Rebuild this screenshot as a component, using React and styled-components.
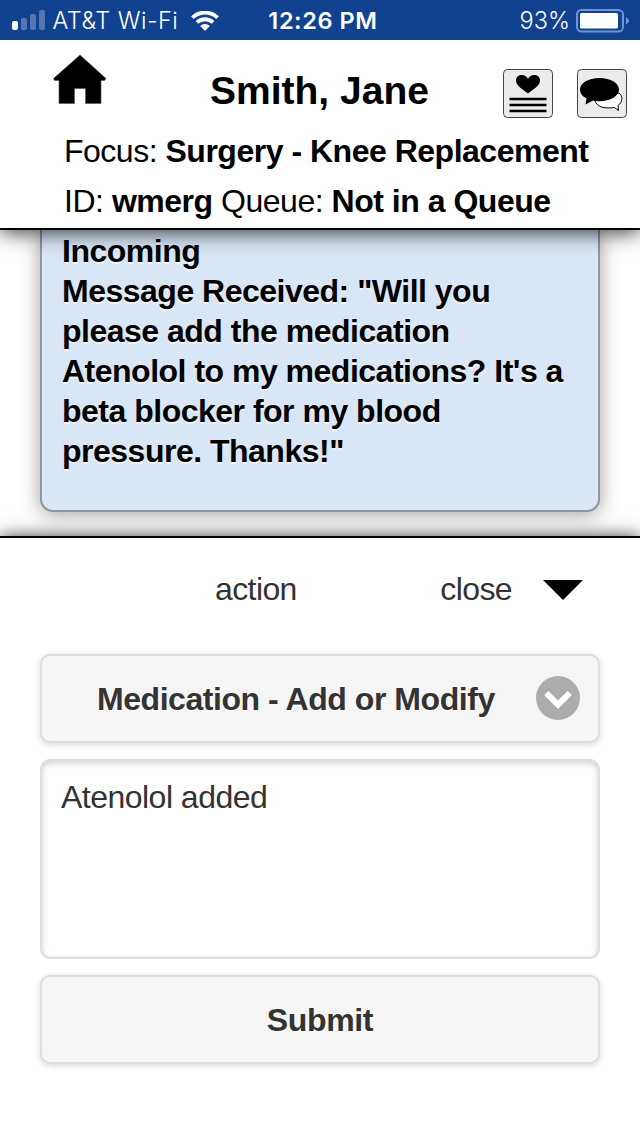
import React from "react";
import styled, { createGlobalStyle } from "styled-components";

const GlobalStyle = createGlobalStyle`
  * { box-sizing: border-box; }
  body { margin: 0; background: #fff; }
`;

const Screen = styled.div`
  width: 640px;
  height: 1136px;
  display: flex;
  flex-direction: column;
  overflow: hidden;
  background: #fff;
  color: #000;
  font: 32px/40px "Liberation Sans", Arial, sans-serif;
`;

const StatusBar = styled.div`
  height: 40px;
  flex: none;
  display: grid;
  grid-template-columns: 1fr auto 1fr;
  align-items: center;
  padding: 2px 11px 0 12px;
  background: #11428f;
  color: #fff;
  font: 400 23.5px/38px Inter, Roboto, sans-serif;
  position: relative;
  z-index: 3;
`;

const StatusGroup = styled.div`
  display: flex;
  align-items: center;
  height: 38px;
  justify-content: ${(p) => (p.$end ? "flex-end" : "flex-start")};
  svg { flex: none; }
`;

const StatusText = styled.span`
  font-weight: ${(p) => p.$weight || 350};
  font-size: ${(p) => p.$size || 23.5}px;
  letter-spacing: ${(p) => p.$spacing || 0}px;
  margin: 0 ${(p) => p.$right || 0}px 0 ${(p) => p.$left || 0}px;
  white-space: nowrap;
`;

const Header = styled.header`
  height: 190px;
  flex: none;
  background: #fff;
  border-bottom: 2px solid #000;
  box-shadow: 0 2px 20px rgba(0, 0, 0, 0.8);
  position: relative;
  z-index: 2;
`;

const TitleRow = styled.div`
  display: flex;
  align-items: flex-start;
  height: 86px;
  padding: 14px 13px 0 52px;
`;

const Title = styled.h1`
  margin: 13px 0 0;
  flex: 1;
  padding-left: 102px;
  font-size: 39px;
  line-height: 48px;
  white-space: nowrap;
`;

const IconTiles = styled.div`
  display: flex;
  gap: 24px;
  padding-top: 14px;
`;

const DetailLine = styled.p`
  margin: 0;
  padding-left: 64px;
  height: 50px;
  line-height: 50px;
  letter-spacing: ${(p) => p.$spacing || 0}px;
  white-space: nowrap;
`;

const Messages = styled.main`
  height: 306px;
  flex: none;
  padding: 0 40px;
`;

const MessageCard = styled.article`
  height: 282px;
  padding: 1px 20px 0;
  background: #d9e6f5;
  border: 2px solid #90969d;
  border-top: 0;
  border-radius: 0 0 13px 13px;
  box-shadow: 0 2px 20px rgba(50, 45, 35, 0.45);
  font-weight: 700;
  text-shadow: 0 2px 0 #f3f3f3;
`;

const MessageLine = styled.div`
  letter-spacing: -0.5px;
  white-space: nowrap;
`;

const ActionPanel = styled.section`
  flex: 1;
  padding: 0 40px;
  background: #fff;
  border-top: 2px solid #000;
  box-shadow: 0 2px 18px rgba(0, 0, 0, 0.9);
  position: relative;
  z-index: 1;
  color: #333;
`;

const PanelBar = styled.div`
  display: flex;
  align-items: center;
  height: 102px;
  padding-left: 175px;
  letter-spacing: -0.6px;
`;

const CloseControl = styled.div`
  display: flex;
  align-items: center;
  gap: 30.5px;
  margin-left: 143.5px;
  svg { margin-top: 2px; }
`;

const Form = styled.div`
  display: flex;
  flex-direction: column;
  gap: 16px;
  padding-top: 14px;
`;

const FormButton = styled.button`
  display: flex;
  align-items: center;
  justify-content: center;
  width: 560px;
  height: 89px;
  padding: ${(p) => (p.$select ? "0 18px 0 55px" : "0")};
  font: 700 32px/40px "Liberation Sans", Arial, sans-serif;
  letter-spacing: ${(p) => p.$spacing || -0.45}px;
  color: #333;
  background: #f5f5f5;
  border: 2px solid #ddd;
  border-radius: 10px;
  box-shadow: 0 2px 6px rgba(0, 0, 0, 0.15);
  text-shadow: 0 2px 0 #f8f8f8;
  svg { margin-bottom: 2px; }
`;

const ButtonLabel = styled.span`
  flex: ${(p) => (p.$fill ? 1 : "none")};
  text-align: ${(p) => (p.$fill ? "left" : "center")};
  white-space: nowrap;
`;

const Notes = styled.textarea`
  display: block;
  width: 560px;
  height: 200px;
  margin: 0;
  padding: 16px 19px;
  resize: none;
  outline: none;
  font: 400 32px/40px "Liberation Sans", Arial, sans-serif;
  letter-spacing: -0.52px;
  color: #333;
  background: #fff;
  border: 2px solid #ddd;
  border-radius: 10px;
  box-shadow: inset 0 2px 6px rgba(0, 0, 0, 0.2);
`;

const Signal = () => (
  <svg width="34" height="22" viewBox="0 0 34 22">
    <rect x="0" y="11" width="6" height="9" rx="2" fill="#fff" />
    <g fill="#5576b2">
      <rect x="9" y="8" width="6" height="12" rx="2" />
      <rect x="18" y="4" width="6" height="16" rx="2" />
      <rect x="27" y="0" width="6" height="20" rx="2" />
    </g>
  </svg>
);

const Wifi = () => (
  <svg width="28" height="20" viewBox="0 0 28 20" fill="none" stroke="#fff" strokeWidth="3.8">
    <path d="M1.4 6.7a18 18 0 0 1 25.2 0" />
    <path d="M6 11.5a11.5 11.5 0 0 1 16 0" />
    <path d="M9.2 15a7 7 0 0 1 9.600 0L14 20z" fill="#fff" stroke="none" />
  </svg>
);

const Battery = () => (
  <svg width="53" height="24" viewBox="0 0 53 24">
    <rect x="1" y="1" width="46" height="21.5" rx="4.5" fill="none" stroke="#6f94d6" strokeWidth="2" />
    <rect x="4" y="4" width="38" height="15.5" rx="1.5" fill="#fff" />
    <path d="M50 8q6 3.8 0 7.6z" fill="#6f94d6" />
  </svg>
);

const Home = () => (
  <svg width="56" height="52" viewBox="0 0 56 52">
    <path d="M28 1 54 24.500 52.500 26.500H49V49.500H33.500V34.500H22.500V49.500H7V26.500H2.500L1.500 24.500z" fill="#000" stroke="#555" strokeWidth=".6" strokeLinejoin="round" />
  </svg>
);

const HealthTile = () => (
  <svg width="50" height="50" viewBox="0 0 50 50">
    <rect x=".5" y="1.5" width="49" height="48" rx="4" fill="#ebebeb" stroke="#444" />
    <path d="M25 25.500C20 21.500 13 18 13 12.500C13 8.500 16 7 18.500 7C21.500 7 24 8.500 25 11C26 8.500 28.500 7 31.500 7C34 7 37 8.500 37 12.500C37 18 30 21.500 25 25.500Z" />
    <path d="M6.500 31H43.500M6.500 37H43.500M6.500 43H43.500" stroke="#000" strokeWidth="2.6" />
  </svg>
);

const ChatTile = () => (
  <svg width="50" height="50" viewBox="0 0 50 50">
    <rect x=".5" y="1.5" width="49" height="48" rx="4" fill="#ebebeb" stroke="#444" />
    <path d="M17.500 32C20 39 27 41 37.500 39.500L41.500 42.500L41 37.500C46 34 46 28 42 25Z" fill="#fff" stroke="#000" />
    <path d="M22.500 10C33.500 10 42 15 42 21.600C42 28 33.500 33.300 22.500 33.300C20 33.300 18 33 16 32.600L8.500 36.500L9.500 30.500C5.500 28.500 3 25.500 3 21.600C3 15 11.500 10 22.500 10Z" />
  </svg>
);

const DownArrow = () => (
  <svg width="40" height="20" viewBox="0 0 40 20">
    <path d="M0 0H40L20 20z" />
  </svg>
);

const SelectArrow = () => (
  <svg width="44" height="44" viewBox="0 0 44 44">
    <circle cx="22" cy="22" r="22" fill="#acacac" />
    <path d="M10.300 17 22 28.700 33.700 17" fill="none" stroke="#fff" strokeWidth="6" />
  </svg>
);

const MESSAGE = [
  "Incoming",
  'Message Received: "Will you',
  "please add the medication",
  "Atenolol to my medications? It's a",
  "beta blocker for my blood",
  'pressure. Thanks!"',
];

export default function App() {
  return (
    <Screen>
      <GlobalStyle />
      <StatusBar>
        <StatusGroup>
          <Signal />
          <StatusText $left={6.5} $right={12.5} $spacing={0.48}>AT&amp;T Wi-Fi</StatusText>
          <Wifi />
        </StatusGroup>
        <StatusText $weight={600} $spacing={0.6} $left={5}>12:26 PM</StatusText>
        <StatusGroup $end>
          <StatusText $right={6}>93%</StatusText>
          <Battery />
        </StatusGroup>
      </StatusBar>
      <Header>
        <TitleRow>
          <Home />
          <Title>Smith, Jane</Title>
          <IconTiles>
            <HealthTile />
            <ChatTile />
          </IconTiles>
        </TitleRow>
        <DetailLine $spacing={-0.49}>Focus: <b>Surgery - Knee Replacement</b></DetailLine>
        <DetailLine $spacing={-0.48}>ID: <b>wmerg</b> Queue: <b>Not in a Queue</b></DetailLine>
      </Header>
      <Messages>
        <MessageCard>
          {MESSAGE.map((line) => (
            <MessageLine key={line}>{line}</MessageLine>
          ))}
        </MessageCard>
      </Messages>
      <ActionPanel>
        <PanelBar>
          <span>action</span>
          <CloseControl>
            <span>close</span>
            <DownArrow />
          </CloseControl>
        </PanelBar>
        <Form>
          <FormButton $select>
            <ButtonLabel $fill>Medication - Add or Modify</ButtonLabel>
            <SelectArrow />
          </FormButton>
          <Notes defaultValue="Atenolol added" />
          <FormButton $spacing={-0.35}>
            <ButtonLabel>Submit</ButtonLabel>
          </FormButton>
        </Form>
      </ActionPanel>
    </Screen>
  );
}
